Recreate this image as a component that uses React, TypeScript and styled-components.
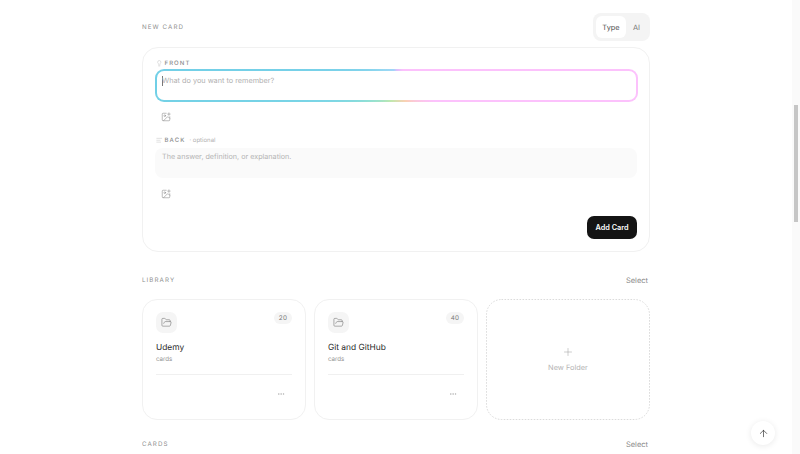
import { ArrowUp, AlignLeft, Ellipsis, FolderOpen, ImagePlus, Lightbulb, Plus } from 'lucide-react';
import styled, { createGlobalStyle } from 'styled-components';

const GlobalStyle = createGlobalStyle`
  html, body {
    margin: 0;
    padding: 0;
    background: #fff;
    font-family: Inter, "Liberation Sans", sans-serif;
    text-rendering: geometricPrecision;
    overflow: hidden;
  }
  * { box-sizing: border-box; }
  svg { display: block; }
`;

const Shell = styled.div`
  display: flex;
  width: 800px;
  height: 454px;
  overflow: hidden;
  position: relative;
`;

const Main = styled.main`
  flex: 1;
  display: flex;
  justify-content: center;
`;

const Column = styled.div`
  width: 508px;
  padding-top: 13px;
  display: flex;
  flex-direction: column;
  /* group layer, keeps the small text greyscale antialiased */
  opacity: 0.999;

  & > * {
    flex-shrink: 0;
  }
`;

const ScrollRail = styled.div`
  width: 8px;
  background: #fafafa;
  padding: 105px 2px 0;
`;

const ScrollThumb = styled.div`
  height: 117px;
  background: #c6c6c6;
`;

const SectionHead = styled.div<{ $h: number; $top?: number }>`
  display: flex;
  align-items: center;
  justify-content: space-between;
  height: ${(p) => p.$h}px;
  margin-top: ${(p) => p.$top ?? 0}px;
`;

const SectionTitle = styled.h2`
  margin: 0;
  font-size: 6.2px;
  font-weight: 400;
  letter-spacing: 1.1px;
  color: #8f8f8f;
`;

const SelectLink = styled.span`
  font-size: 7.5px;
  color: #8a8a8a;
  margin-right: 2px;
`;

const Toggle = styled.div`
  display: flex;
  height: 28px;
  padding: 3px;
  border-radius: 8px;
  background: #f4f4f4;
`;

const ToggleItem = styled.span<{ $on?: boolean }>`
  display: flex;
  align-items: center;
  justify-content: center;
  width: ${(p) => (p.$on ? 30 : 21)}px;
  border-radius: 6px;
  font-size: 7.4px;
  color: ${(p) => (p.$on ? '#555' : '#777')};
  background: ${(p) => (p.$on ? '#fff' : 'transparent')};
`;

const ComposeCard = styled.section`
  margin-top: 6px;
  height: 204.5px;
  border: 1px solid #f1f1f1;
  border-radius: 16px;
  padding: 10px 12px 12px;
  display: flex;
  flex-direction: column;
`;

const FieldLabel = styled.div`
  display: flex;
  align-items: center;
  height: 11px;
  padding-left: 1px;
  gap: 2px;
  color: #b4b4b4;
`;

const LabelText = styled.span`
  font-size: 6px;
  font-weight: 500;
  letter-spacing: 1.1px;
  color: #8c8c8c;
`;

const LabelHint = styled.span`
  font-size: 6px;
  color: #b0b0b0;
  margin-left: 2px;
`;

const RainbowField = styled.div`
  margin: 0 -0.5px;
  height: 33px;
  border-radius: 9px;
  padding: 2px;
  background: conic-gradient(
    from 0deg at 50% 50%,
    #d8c0fa 0deg,
    #fcc0fc 23deg,
    #fcc2fc 112deg,
    #fad0b4 149deg,
    #c0e8ae 200deg,
    #92e0d4 241deg,
    #7cd6e6 258deg,
    #70cfe6 270deg,
    #96d8f2 320deg,
    #a2d4f8 350deg,
    #d8c0fa 360deg
  );
`;

const RainbowInner = styled.div`
  height: 100%;
  border-radius: 7px;
  background: #fff;
  padding: 4px 5.5px;
  font-size: 7.3px;
  line-height: 12px;
  color: #b0b0b0;
  position: relative;
`;

const Placeholder = styled.span`
  display: inline-block;
  opacity: 0.999;
`;

const Caret = styled.i`
  position: absolute;
  left: 5.5px;
  top: 4.5px;
  width: 1px;
  height: 10px;
  background: #777;
`;

const BackField = styled.div`
  margin-top: 2px;
  height: 30px;
  border-radius: 8px;
  background: #fafafa;
  padding: 3px 7px;
  font-size: 7.2px;
  line-height: 12px;
  color: #b4b4b4;
`;

const ImageRow = styled.div<{ $h: number; $pad: number }>`
  height: ${(p) => p.$h}px;
  padding: ${(p) => p.$pad}px 0 0 6px;
  color: #8d8d8d;
`;

const Footer = styled.div`
  display: flex;
  justify-content: flex-end;
  margin-top: auto;
`;

const AddButton = styled.button`
  width: 50px;
  height: 23px;
  border: 0;
  border-radius: 7px;
  padding: 0;
  background: #141414;
  color: #fff;
  font-family: inherit;
  font-size: 7.3px;
  font-weight: 600;
`;

const FolderGrid = styled.div`
  display: grid;
  grid-template-columns: repeat(3, 164px);
  gap: 8px;
`;

const FolderCard = styled.article`
  height: 121px;
  border: 1px solid #f1f1f1;
  border-radius: 15px;
  padding: 12.5px 13px 0;
  display: flex;
  flex-direction: column;
`;

const FolderTop = styled.div`
  display: flex;
  justify-content: space-between;
  align-items: flex-start;
`;

const FolderIcon = styled.div`
  width: 21px;
  height: 21px;
  border-radius: 7px;
  background: #f5f5f5;
  color: #777;
  display: flex;
  align-items: center;
  justify-content: center;
`;

const CountPill = styled.span`
  width: 18px;
  height: 12px;
  border-radius: 6px;
  background: #f5f5f5;
  color: #777;
  font-size: 6.3px;
  line-height: 12px;
  letter-spacing: 0.3px;
  text-align: center;
`;

const FolderName = styled.div`
  margin-top: 8px;
  font-size: 8.4px;
  line-height: 14px;
  color: #2a2a2a;
`;

const FolderMeta = styled.div`
  font-size: 6.2px;
  line-height: 10px;
  color: #8f8f8f;
`;

const Divider = styled.hr`
  width: 100%;
  margin: 8.5px 0 0;
  border: 0;
  border-top: 1px solid #f0f0f0;
`;

const MoreRow = styled.div`
  display: flex;
  justify-content: flex-end;
  padding: 15px 7px 0 0;
  color: #9a9a9a;
`;

const NewFolder = styled.article`
  position: relative;
  height: 121px;
  display: flex;
  flex-direction: column;
  align-items: center;
  justify-content: center;
  gap: 5px;
  color: #9a9a9a;
`;

const DashedOutline = styled.svg`
  position: absolute;
  inset: 0;
  width: 100%;
  height: 100%;
  fill: none;
  stroke: #d2d2d2;
  stroke-width: 0.8;
  stroke-dasharray: 1.6 1.4;
`;

const NewFolderText = styled.span`
  font-size: 7.4px;
  color: #b4b4b4;
`;

const TopButton = styled.button`
  position: absolute;
  left: 751px;
  top: 421px;
  width: 24px;
  height: 24px;
  border: 0;
  border-radius: 50%;
  padding: 0;
  background: #fff;
  color: #333;
  box-shadow: 0 1px 6px rgba(0, 0, 0, 0.09);
  display: flex;
  align-items: center;
  justify-content: center;
`;

const folders = [
  { name: 'Udemy', count: 20 },
  { name: 'Git and GitHub', count: 40 },
];

export default function App() {
  return (
    <Shell>
      <GlobalStyle />
      <Main>
        <Column>
          <SectionHead $h={28}>
            <SectionTitle>NEW CARD</SectionTitle>
            <Toggle>
              <ToggleItem $on>Type</ToggleItem>
              <ToggleItem>AI</ToggleItem>
            </Toggle>
          </SectionHead>

          <ComposeCard>
            <FieldLabel>
              <Lightbulb size={6.5} strokeWidth={1.5} />
              <LabelText>FRONT</LabelText>
            </FieldLabel>
            <RainbowField>
              <RainbowInner>
                <Caret />
                <Placeholder>What do you want to remember?</Placeholder>
              </RainbowInner>
            </RainbowField>
            <ImageRow $h={33} $pad={10}>
              <ImagePlus size={10} strokeWidth={1.4} />
            </ImageRow>
            <FieldLabel>
              <AlignLeft size={6.5} strokeWidth={1.5} />
              <LabelText>BACK</LabelText>
              <LabelHint>· optional</LabelHint>
            </FieldLabel>
            <BackField>The answer, definition, or explanation.</BackField>
            <ImageRow $h={32} $pad={11}>
              <ImagePlus size={10} strokeWidth={1.4} />
            </ImageRow>
            <Footer>
              <AddButton>Add Card</AddButton>
            </Footer>
          </ComposeCard>

          <SectionHead $h={36} $top={11}>
            <SectionTitle>LIBRARY</SectionTitle>
            <SelectLink>Select</SelectLink>
          </SectionHead>

          <FolderGrid>
            {folders.map((f) => (
              <FolderCard key={f.name}>
                <FolderTop>
                  <FolderIcon>
                    <FolderOpen size={11} strokeWidth={1.3} />
                  </FolderIcon>
                  <CountPill>{f.count}</CountPill>
                </FolderTop>
                <FolderName>{f.name}</FolderName>
                <FolderMeta>cards</FolderMeta>
                <Divider />
                <MoreRow>
                  <Ellipsis size={8} strokeWidth={1.4} />
                </MoreRow>
              </FolderCard>
            ))}
            <NewFolder>
              <DashedOutline viewBox="0 0 164 121">
                <rect x="0.5" y="0.5" width="163" height="120" rx="15" />
              </DashedOutline>
              <Plus size={12} strokeWidth={1} />
              <NewFolderText>New Folder</NewFolderText>
            </NewFolder>
          </FolderGrid>

          <SectionHead $h={50}>
            <SectionTitle>CARDS</SectionTitle>
            <SelectLink>Select</SelectLink>
          </SectionHead>
        </Column>
      </Main>
      <ScrollRail>
        <ScrollThumb />
      </ScrollRail>
      <TopButton aria-label="Back to top">
        <ArrowUp size={11} strokeWidth={1.5} />
      </TopButton>
    </Shell>
  );
}
